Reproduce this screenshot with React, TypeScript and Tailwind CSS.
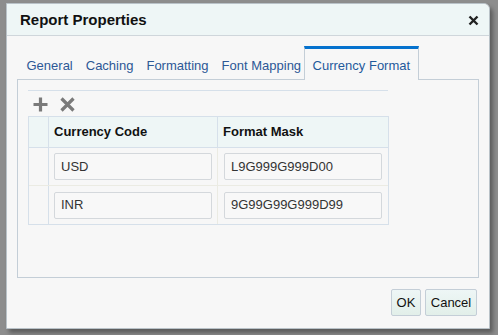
import React from 'react';

const TABS = ['General', 'Caching', 'Formatting', 'Font Mapping', 'Currency Format'];

const ROWS = [
  { code: 'USD', mask: 'L9G999G999D00' },
  { code: 'INR', mask: '9G99G99G999D99' },
];

const App: React.FC = () => {
  return (
    <div
      className="w-[498px] h-[335px] bg-[#8d8d8d] pl-[6px] pt-[3px] overflow-hidden"
      style={{ fontFamily: '"Liberation Sans", Arial, sans-serif' }}
    >
      <div className="w-[484px] h-[326px] bg-[#f7f7f7] border border-[#b9c2c8] rounded-tr-[6px] flex flex-col shadow-[3px_4px_4px_rgba(0,0,0,0.35)]">
        {/* title bar */}
        <div className="h-[32px] bg-[#eef6f6] border-b border-[#cfd6db] flex items-center justify-between pl-[13px] pr-[10px] pt-[1px] rounded-tr-[6px]">
          <span className="text-[15px] font-bold text-[#111]">Report Properties</span>
          <svg width="11" height="11" viewBox="0 0 11 11">
            <path d="M1.5 1.5 L9.5 9.5 M9.5 1.5 L1.5 9.5" stroke="#222" strokeWidth="2.4" />
          </svg>
        </div>

        {/* tabs */}
        <div className="flex items-end pl-[10px] pr-[10px] mt-[10px] h-[33px]">
          <div className="flex items-end pl-[3px]">
            {TABS.map((t, i) => {
              const active = i === TABS.length - 1;
              return active ? (
                <div
                  key={t}
                  className="ml-[-4px] h-[34px] px-[8px] border-x border-t-[3px] border-[#c4ced7] border-t-[#0572ce] bg-[#f7f7f7] flex items-center text-[13px] text-[#1f5a9c] relative top-[1px] pt-[3px]"
                >
                  {t}
                </div>
              ) : (
                <div key={t} className="h-[32px] px-[6.5px] pt-[6px] flex items-center text-[13px] text-[#2d5896]">
                  {t}
                </div>
              );
            })}
          </div>
        </div>

        {/* panel */}
        <div className="mx-[10px] h-[199px] border border-[#c4ced7] px-[10px] pt-[10px]">
          <div className="w-[360px] border-t border-[#d6e0ea]"></div>
          <div className="flex items-center gap-[12px] pl-[5px] h-[25px] pt-[1px]">
            <svg width="15" height="15" viewBox="0 0 15 15">
              <path d="M7.5 0.5 V14.5 M0.5 7.5 H14.5" stroke="#7a7a7a" strokeWidth="3.2" />
            </svg>
            <svg width="15" height="15" viewBox="0 0 15 15">
              <path d="M1.5 1.5 L13.5 13.5 M13.5 1.5 L1.5 13.5" stroke="#7a7a7a" strokeWidth="3.2" />
            </svg>
          </div>
          <div className="w-[361px] border border-[#d6e0ea] text-[13px]">
            <div className="flex h-[31px] bg-[#eef6f6] border-b border-[#d6e0ea]">
              <div className="w-[20px] border-r border-[#d6e0ea]"></div>
              <div className="w-[169px] border-r border-[#d6e0ea] pl-[5px] flex items-center font-bold text-[#111]">
                Currency Code
              </div>
              <div className="flex-1 pl-[5px] flex items-center font-bold text-[#111]">Format Mask</div>
            </div>
            {ROWS.map((r, i) => (
              <div key={r.code} className={`flex h-[38px] ${i === 0 ? 'border-b border-[#ebebe3]' : ''}`}>
                <div className="w-[20px] border-r border-[#d6e0ea]"></div>
                <div className="w-[169px] border-r border-[#ebebe3] px-[5px] flex items-center">
                  <div className="w-[158px] h-[27px] border border-[#d4d8dc] rounded-[2px] bg-[#f8f8f8] flex items-center pl-[6px] text-[#333]">
                    {r.code}
                  </div>
                </div>
                <div className="flex-1 pl-[6px] flex items-center">
                  <div className="w-[158px] h-[27px] border border-[#d4d8dc] rounded-[2px] bg-[#f8f8f8] flex items-center pl-[6px] text-[#333]">
                    {r.mask}
                  </div>
                </div>
              </div>
            ))}
          </div>
        </div>

        {/* buttons */}
        <div className="flex justify-end gap-[4px] pr-[12px] mt-[11px]">
          <button className="h-[27px] w-[30px] border border-[#c4ced7] rounded-[2px] bg-gradient-to-b from-[#eef6f6] to-[#e2efe9] text-[13px] text-[#111]">
            OK
          </button>
          <button className="h-[27px] w-[52px] border border-[#c4ced7] rounded-[2px] bg-gradient-to-b from-[#eef6f6] to-[#e2efe9] text-[13px] text-[#111]">
            Cancel
          </button>
        </div>
      </div>
    </div>
  );
};

export default App;
